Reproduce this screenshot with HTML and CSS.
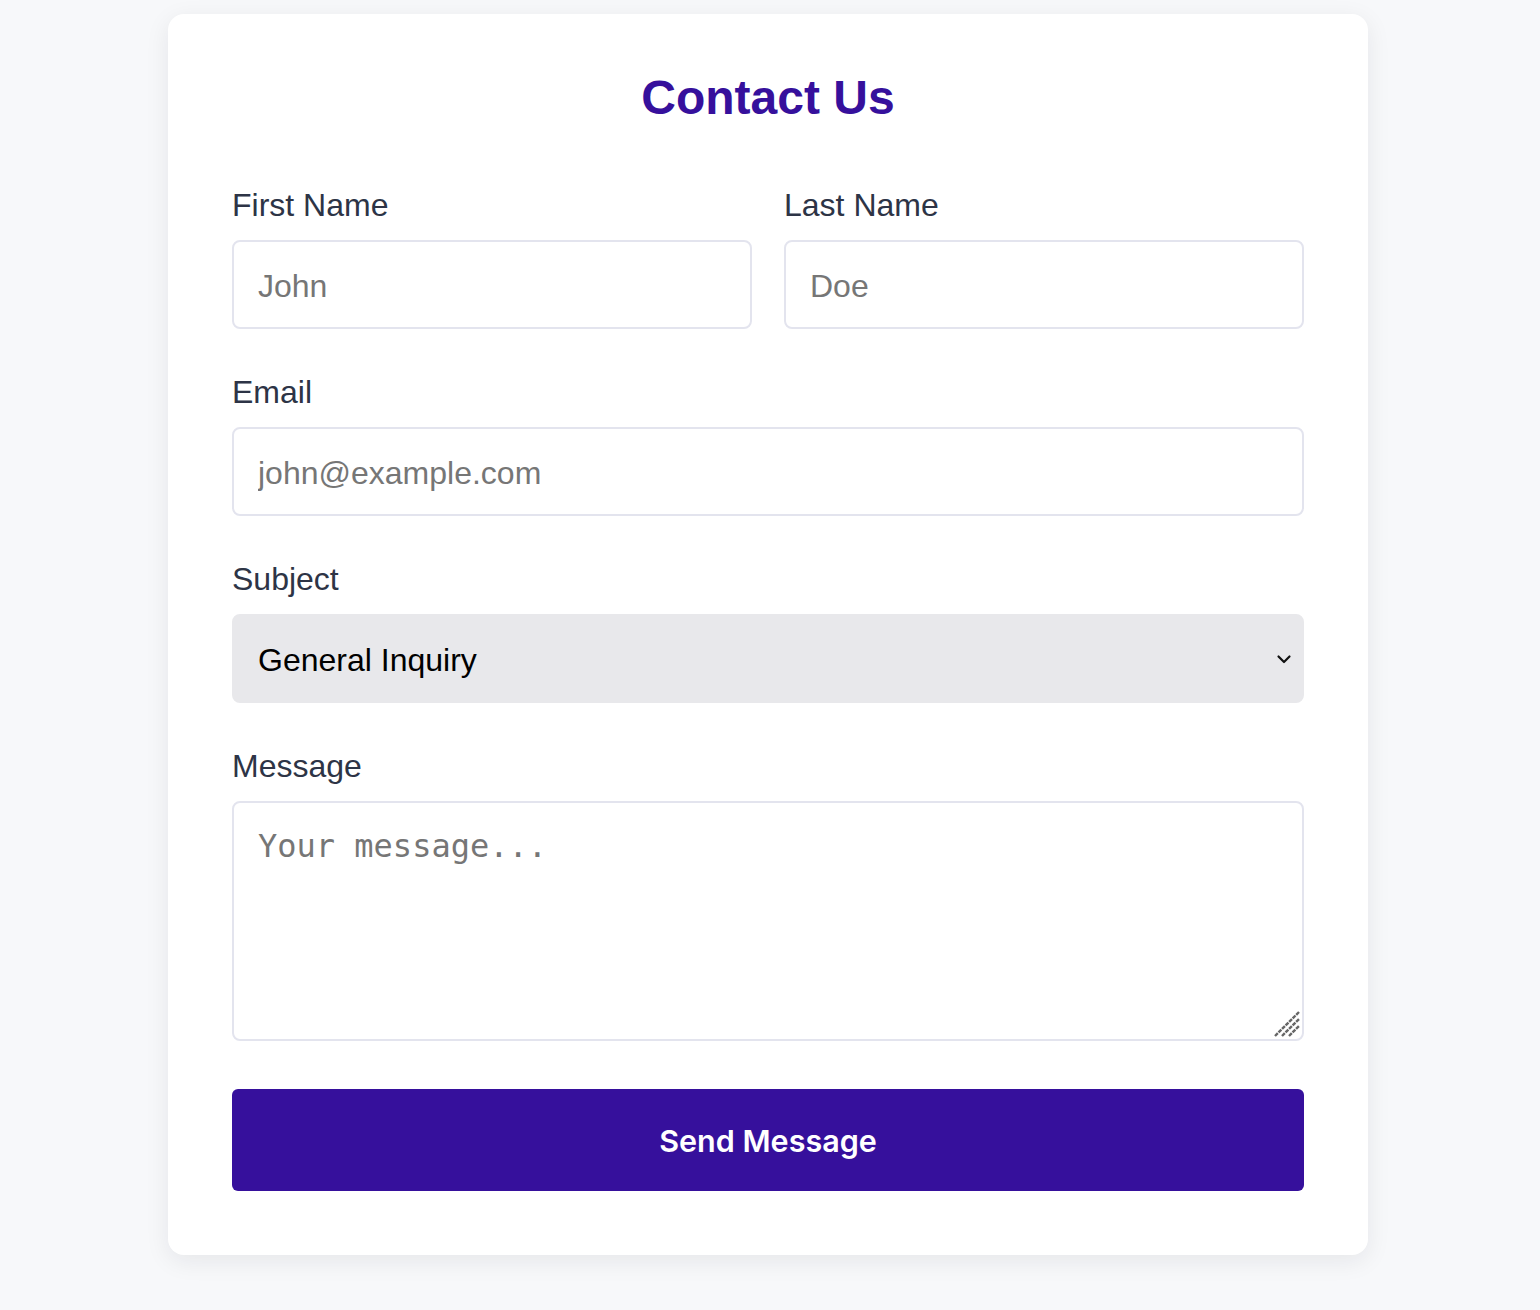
FILE: index.html
```html
<!DOCTYPE html>
<html lang="en">
<head>
<meta charset="utf-8">
<title>Contact Us</title>
<link rel="stylesheet" href="styles.css">
</head>
<body>
<main class="page">
  <form class="card" onsubmit="return false">
    <h1 class="title">Contact Us</h1>
    <div class="row">
      <div class="field">
        <label class="label" for="first">First Name</label>
        <input class="input" id="first" type="text" placeholder="John">
      </div>
      <div class="field">
        <label class="label" for="last">Last Name</label>
        <input class="input" id="last" type="text" placeholder="Doe">
      </div>
    </div>
    <div class="field">
      <label class="label" for="email">Email</label>
      <input class="input" id="email" type="email" placeholder="john@example.com">
    </div>
    <div class="field">
      <label class="label" for="subject">Subject</label>
      <div class="select-wrap">
        <select class="select" id="subject">
          <option>General Inquiry</option>
          <option>Support</option>
          <option>Feedback</option>
        </select>
        <svg class="chevron" viewBox="0 0 16 16" width="16" height="16" aria-hidden="true"><path d="M2.5 5.5 L8 11 L13.5 5.5" fill="none" stroke="#111" stroke-width="2.2" stroke-linecap="round" stroke-linejoin="round"/></svg>
      </div>
    </div>
    <div class="field field-last">
      <label class="label" for="message">Message</label>
      <div class="textarea-wrap">
        <textarea class="textarea" id="message" placeholder="Your message..."></textarea>
        <svg class="grip" viewBox="0 0 26 26" width="26" height="26" aria-hidden="true">
          <g stroke="#666" stroke-width="2.4" stroke-linecap="butt" stroke-dasharray="4 1">
            <line x1="1" y1="25" x2="25" y2="1"/>
            <line x1="8" y1="25" x2="25" y2="8"/>
            <line x1="15" y1="25" x2="25" y2="15"/>
          </g>
        </svg>
      </div>
    </div>
    <button class="button" type="submit">Send Message</button>
  </form>
</main>
</body>
</html>
```

FILE: styles.css
```css
* { box-sizing: border-box; }

html, body {
  margin: 0;
  padding: 0;
  background: #f7f8fa;
}

.page {
  display: flex;
  justify-content: center;
  padding: 14px 4px 56px 0;
}

.card {
  width: 1200px;
  background: #ffffff;
  border-radius: 16px;
  box-shadow: 0 6px 24px rgba(20, 24, 40, 0.08);
  padding: 56px 64px 64px;
  display: flex;
  flex-direction: column;
  font-family: "Liberation Sans", Arial, sans-serif;
}

.title {
  margin: 0 0 62px;
  text-align: center;
  font-size: 48px;
  font-weight: 700;
  color: #36109c;
  line-height: 55px;
}

.row {
  display: grid;
  grid-template-columns: 1fr 1fr;
  gap: 32px;
}

.field {
  display: flex;
  flex-direction: column;
  margin-bottom: 45px;
}

.field-last {
  margin-bottom: 48px;
}

.label {
  font-size: 32px;
  color: #2d3446;
  line-height: 37px;
  margin-bottom: 16px;
}

.input,
.select,
.textarea {
  width: 100%;
  font-size: 32px;
  border: 2px solid #e3e4ee;
  border-radius: 8px;
  padding: 24px;
  color: #111;
  background: #fff;
  outline: none;
}

.input {
  height: 89px;
  padding: 26px 24px 22px;
  font-family: "Liberation Sans", Arial, sans-serif;
}

.input::placeholder,
.textarea::placeholder {
  color: #767676;
}

.select-wrap,
.textarea-wrap {
  position: relative;
}

.select {
  height: 89px;
  appearance: none;
  -webkit-appearance: none;
  background: #e8e8eb;
  border-color: #e8e8eb;
  font-family: "Liberation Sans", Arial, sans-serif;
  color: #000;
  padding: 2px 24px 0;
}

.chevron {
  position: absolute;
  right: 12px;
  top: 37px;
  pointer-events: none;
}

.textarea {
  display: block;
  height: 240px;
  font-family: "DejaVu Sans Mono", "Liberation Mono", monospace;
  padding: 24px;
  resize: none;
  line-height: 1.2;
}

.grip {
  position: absolute;
  right: 4px;
  bottom: 4px;
  pointer-events: none;
}

.button {
  height: 102px;
  border: none;
  border-radius: 6px;
  background: #36109c;
  color: #fff;
  font-family: Inter, "Liberation Sans", sans-serif;
  font-size: 30.5px;
  font-weight: 600;
  cursor: pointer;
}
```
